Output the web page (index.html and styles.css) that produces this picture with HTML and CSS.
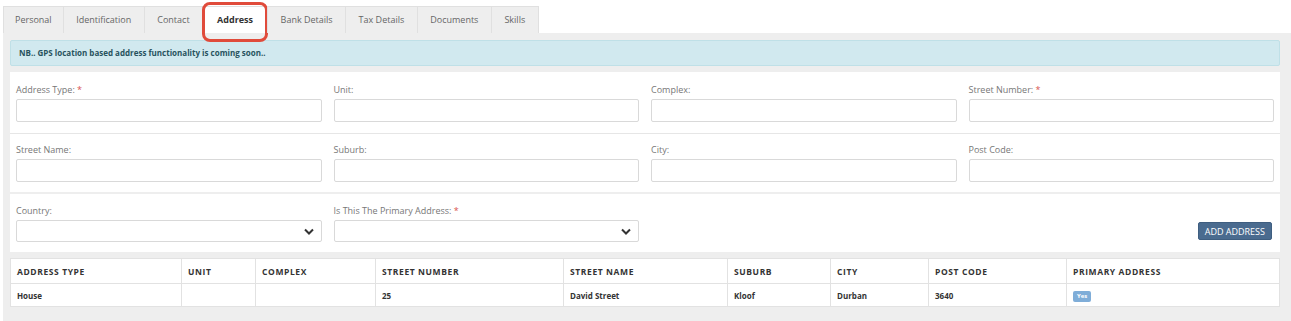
FILE: index.html
```html
<!DOCTYPE html>
<html>
<head>
<meta charset="utf-8">
<link rel="stylesheet" href="styles.css">
</head>
<body>
<div class="page">
  <ul class="tabs">
    <li class="tab first">Personal</li>
    <li class="tab">Identification</li>
    <li class="tab">Contact</li>
    <li class="tab active">Address<span class="mark"></span></li>
    <li class="tab">Bank Details</li>
    <li class="tab">Tax Details</li>
    <li class="tab">Documents</li>
    <li class="tab">Skills</li>
  </ul>
  <div class="panel">
    <div class="alert">NB.. GPS location based address functionality is coming soon..</div>
    <div class="card">
      <div class="row first-row">
        <div class="field"><label>Address Type: <span class="req">*</span></label><div class="input"></div></div>
        <div class="field"><label>Unit:</label><div class="input"></div></div>
        <div class="field"><label>Complex:</label><div class="input"></div></div>
        <div class="field"><label>Street Number: <span class="req">*</span></label><div class="input"></div></div>
      </div>
      <div class="row second-row">
        <div class="field"><label>Street Name:</label><div class="input"></div></div>
        <div class="field"><label>Suburb:</label><div class="input"></div></div>
        <div class="field"><label>City:</label><div class="input"></div></div>
        <div class="field"><label>Post Code:</label><div class="input"></div></div>
      </div>
    </div>
    <div class="card card2">
      <div class="row">
        <div class="field"><label>Country:</label><div class="input select"><svg width="10" height="7" viewBox="0 0 10 7"><path d="M1 1.5 L5 5.5 L9 1.5" fill="none" stroke="#333" stroke-width="2"/></svg></div></div>
        <div class="field"><label>Is This The Primary Address: <span class="req">*</span></label><div class="input select"><svg width="10" height="7" viewBox="0 0 10 7"><path d="M1 1.5 L5 5.5 L9 1.5" fill="none" stroke="#333" stroke-width="2"/></svg></div></div>
        <div class="field"></div>
        <div class="field btncell"><button class="btn">ADD ADDRESS</button></div>
      </div>
    </div>
    <table class="grid">
      <thead>
        <tr>
          <th class="c1">ADDRESS TYPE</th><th class="c2">UNIT</th><th class="c3">COMPLEX</th><th class="c4">STREET NUMBER</th><th class="c5">STREET NAME</th><th class="c6">SUBURB</th><th class="c7">CITY</th><th class="c8">POST CODE</th><th>PRIMARY ADDRESS</th>
        </tr>
      </thead>
      <tbody>
        <tr>
          <td>House</td><td></td><td></td><td>25</td><td>David Street</td><td>Kloof</td><td>Durban</td><td>3640</td><td><span class="badge">Yes</span></td>
        </tr>
      </tbody>
    </table>
  </div>
</div>
</body>
</html>
```
FILE: styles.css
```css
* { box-sizing: border-box; }
html, body { margin: 0; padding: 0; background: #fff; }
body { font-family: "Open Sans", "Liberation Sans", sans-serif; color: #555; }
.page { padding: 6px 0 0 3px; }
.tabs { list-style: none; margin: 0; padding: 0; display: flex; height: 27px; }
.tab {
  position: relative;
  padding: 0 12.5px;
  font-size: 9px;
  line-height: 26px;
  color: #666;
  background: #eeeeee;
  border: 1px solid #e0e0e0;
  border-right: none;
  border-bottom: none;
}
.tab.first { padding: 0 11px; }
.tab:last-child { border-right: 1px solid #e0e0e0; }
.tab.active { background: #fff; color: #333; font-weight: 700; padding: 0 14px; }
.mark {
  position: absolute;
  left: -1px; top: -5px; right: -1px; bottom: -9px;
  border: 3px solid #e04b3b;
  border-radius: 8px;
}
.panel { background: #eeeeee; padding: 7px 11px 14px 7px; }
.alert {
  background: #d1e9ef;
  border: 1px solid #bfe0e7;
  border-radius: 2px;
  height: 26px;
  padding: 0 8px;
  font-size: 8px;
  font-weight: 700;
  color: #28535e;
  line-height: 24px;
}
.card { background: #fff; margin-top: 6px; }
.card2 { margin-top: 2px; }
.row {
  display: grid;
  grid-template-columns: repeat(4, 1fr);
  column-gap: 12px;
  padding: 12px 6px 10px;
}
.row.first-row { padding-top: 13px; padding-bottom: 11px; border-bottom: 1px solid #e6e6e6; }
.row.second-row { padding-top: 11px; padding-bottom: 10px; }
.field label { display: block; font-size: 9px; color: #777; height: 10px; line-height: 10px; margin-bottom: 4px; }
.req { color: #d9534f; }
.input { height: 23px; border: 1px solid #d9d9d9; border-radius: 2px; background: #fff; }
.select { display: flex; align-items: center; justify-content: flex-end; padding-right: 7px; height: 22px; }
.btncell { display: flex; justify-content: flex-end; align-items: flex-end; padding-right: 2px; }
.btn {
  background: #4a6b8f;
  color: #fff;
  border: 1px solid #3f5e80;
  border-radius: 2px;
  font-family: "Open Sans", "Liberation Sans", sans-serif;
  font-size: 9px;
  height: 18px;
  padding: 0 6px;
  margin-bottom: 2px;
}
.grid {
  width: 100%;
  margin-top: 6px;
  border-collapse: collapse;
  background: #fff;
  font-size: 8px;
  font-weight: 700;
  color: #333;
}
.grid th, .grid td {
  border: 1px solid #e2e2e2;
  text-align: left;
  padding: 0 6px;
}
.grid th { height: 25px; font-size: 8.5px; letter-spacing: 0.6px; }
.grid td { height: 23px; }
.c1 { width: 171px; }
.c2 { width: 74px; }
.c3 { width: 120px; }
.c4 { width: 188px; }
.c5 { width: 164px; }
.c6 { width: 103px; }
.c7 { width: 98px; }
.c8 { width: 138px; }
.badge {
  display: inline-block;
  background: #7fadd8;
  color: #fff;
  font-size: 6px;
  padding: 2px 4px;
  border-radius: 2px;
  line-height: 7px;
}
```
